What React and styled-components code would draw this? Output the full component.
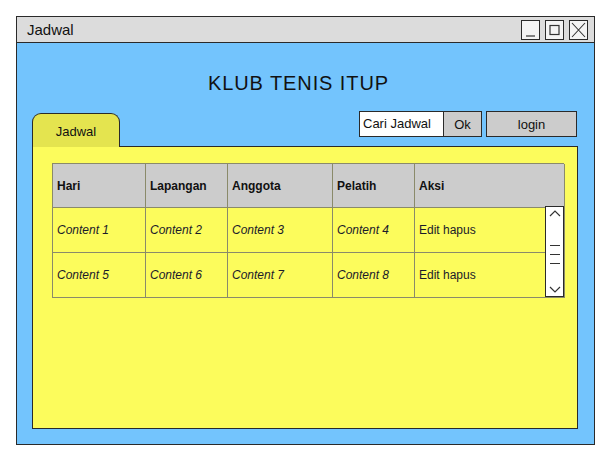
import React from 'react'
import styled, { createGlobalStyle } from 'styled-components'

const GlobalStyle = createGlobalStyle`
  body {
    margin: 0;
    background: #ffffff;
    font-family: "Comic Sans MS", "Liberation Sans", sans-serif;
    color: #111;
  }
`

const Page = styled.div`
  padding: 16px 0 0 16px;
`

const Window = styled.div`
  width: 577px;
  height: 427px;
  border: 1px solid #2a2a2a;
  display: flex;
  flex-direction: column;
  background: #73c4fd;
`

const TitleBar = styled.div`
  height: 25px;
  background: #dcdcdc;
  border-bottom: 1px solid #2a2a2a;
  display: flex;
  align-items: center;
  justify-content: space-between;
  padding: 0 6px 0 10px;
`

const TitleText = styled.span`
  font-size: 15px;
`

const WinButtons = styled.div`
  display: flex;
  gap: 5px;
`

const WinButton = styled.div`
  width: 17px;
  height: 18px;
  border: 1px solid #2a2a2a;
  background: #f4f4f4;
  display: flex;
  align-items: center;
  justify-content: center;
`

const Body = styled.div`
  flex: 1;
  display: flex;
  flex-direction: column;
  padding: 0 16px 15px 15px;
`

const Heading = styled.h1`
  margin: 28px 13px 16px 0;
  text-align: center;
  font-size: 20px;
  line-height: 24px;
  font-weight: normal;
  letter-spacing: 0.9px;
`

const Toolbar = styled.div`
  display: flex;
  justify-content: space-between;
  align-items: flex-end;
  position: relative;
  z-index: 1;
`

const Tab = styled.div`
  width: 88px;
  height: 34px;
  margin-bottom: -1px;
  background: #e4e44f;
  border: 1px solid #2a2a2a;
  border-bottom: none;
  border-radius: 9px 9px 0 0;
  display: flex;
  align-items: center;
  justify-content: center;
  font-size: 13px;
  padding-top: 2px;
  box-sizing: border-box;
`

const Controls = styled.div`
  display: flex;
  align-items: center;
  margin: 0 1px 9px 0;
  gap: 4px;
`

const SearchGroup = styled.div`
  display: flex;
`

const SearchInput = styled.div`
  width: 85px;
  height: 26px;
  box-sizing: border-box;
  background: #fff;
  border: 1px solid #2a2a2a;
  font-size: 13px;
  padding: 0 0 2px 3px;
  display: flex;
  align-items: center;
`

const Button = styled.div`
  width: ${p => p.$w}px;
  height: 26px;
  box-sizing: border-box;
  background: #cccccc;
  border: 1px solid #2a2a2a;
  ${p => p.$attached && 'border-left: none;'}
  display: flex;
  align-items: center;
  justify-content: center;
  font-size: 13px;
`

const Panel = styled.div`
  flex: 1;
  background: #fcfc5c;
  border: 1px solid #2a2a2a;
  padding: 16px 0 0 19px;
`

const TableWrap = styled.div`
  position: relative;
  width: 512px;
`

const Table = styled.div`
  display: grid;
  grid-template-columns: 93px 82px 105px 82px 150px;
  border-top: 1px solid #8a8a6a;
  border-left: 1px solid #8a8a6a;
`

const Cell = styled.div`
  height: ${p => (p.$head ? 43 : 44)}px;
  display: flex;
  align-items: center;
  padding-left: 4px;
  font-size: 12px;
  border-right: 1px solid #8a8a6a;
  border-bottom: 1px solid #8a8a6a;
  background: ${p => (p.$head ? '#cccccc' : 'transparent')};
  font-weight: ${p => (p.$head ? 'bold' : 'normal')};
  font-style: ${p => (p.$italic ? 'italic' : 'normal')};
  color: ${p => (p.$head ? '#111' : '#1a1a2a')};
`

const Scrollbar = styled.div`
  position: absolute;
  right: 0;
  top: 43px;
  width: 19px;
  height: 91px;
  box-sizing: border-box;
  background: #fff;
  border: 1px solid #2a2a2a;
  display: flex;
  flex-direction: column;
  align-items: center;
  justify-content: space-between;
  padding: 3px 0;
`

const Grip = styled.div`
  display: flex;
  flex-direction: column;
  gap: 8px;
  margin-top: 6px;
`

const GripLine = styled.div`
  width: 10px;
  height: 1px;
  background: #333;
`

const headers = ['Hari', 'Lapangan', 'Anggota', 'Pelatih', 'Aksi']
const rows = [
  ['Content 1', 'Content 2', 'Content 3', 'Content 4'],
  ['Content 5', 'Content 6', 'Content 7', 'Content 8'],
]

const Chevron = ({ up }) => (
  <svg width="12" height="7" viewBox="0 0 12 7">
    <path d={up ? 'M1 6 L6 1 L11 6' : 'M1 1 L6 6 L11 1'} fill="none" stroke="#333" strokeWidth="1.2" />
  </svg>
)

export default function App() {
  return (
    <>
      <GlobalStyle />
      <Page>
        <Window>
          <TitleBar>
            <TitleText>Jadwal</TitleText>
            <WinButtons>
              <WinButton>
                <svg width="13" height="14" viewBox="0 0 13 14">
                  <path d="M2 13 L11 13" stroke="#333" strokeWidth="1.2" />
                </svg>
              </WinButton>
              <WinButton>
                <svg width="13" height="14" viewBox="0 0 13 14">
                  <rect x="2" y="2.5" width="9" height="9" fill="none" stroke="#333" strokeWidth="1.2" />
                </svg>
              </WinButton>
              <WinButton>
                <svg width="15" height="16" viewBox="0 0 15 16">
                  <path d="M1 1 L14 15 M14 1 L1 15" stroke="#333" strokeWidth="1.1" />
                </svg>
              </WinButton>
            </WinButtons>
          </TitleBar>
          <Body>
            <Heading>KLUB TENIS ITUP</Heading>
            <Toolbar>
              <Tab>Jadwal</Tab>
              <Controls>
                <SearchGroup>
                  <SearchInput>Cari Jadwal</SearchInput>
                  <Button $w={38} $attached>Ok</Button>
                </SearchGroup>
                <Button $w={91}>login</Button>
              </Controls>
            </Toolbar>
            <Panel>
              <TableWrap>
                <Table>
                  {headers.map(h => (
                    <Cell key={h} $head>{h}</Cell>
                  ))}
                  {rows.map((r, i) => (
                    <React.Fragment key={i}>
                      {r.map(c => (
                        <Cell key={c} $italic>{c}</Cell>
                      ))}
                      <Cell>Edit hapus</Cell>
                    </React.Fragment>
                  ))}
                </Table>
                <Scrollbar>
                  <Chevron up />
                  <Grip>
                    <GripLine />
                    <GripLine />
                    <GripLine />
                  </Grip>
                  <Chevron />
                </Scrollbar>
              </TableWrap>
            </Panel>
          </Body>
        </Window>
      </Page>
    </>
  )
}
